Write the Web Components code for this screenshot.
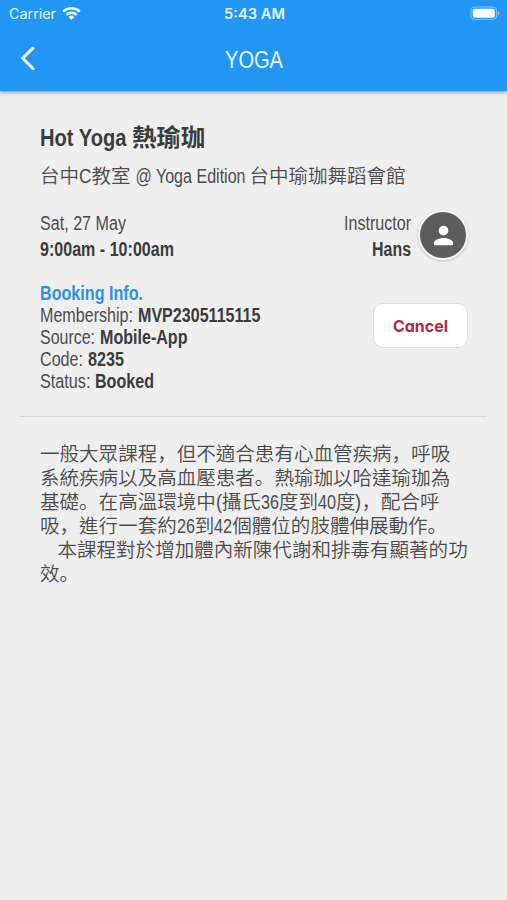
<!DOCTYPE html>
<html lang="zh-Hant">
<head>
<meta charset="utf-8">
<title>YOGA</title>
<style>
html,body{margin:0;height:100%;background:#efefef}
body{font-family:"Liberation Sans Narrow","Liberation Sans","Noto Sans CJK TC",sans-serif;color:#4c4c4c}
</style>
</head>
<body>
<yoga-screen></yoga-screen>
<script>
// Single line of text condensed or widened to a given width
class FitText extends HTMLElement{
  connectedCallback(){
    const r=this.attachShadow({mode:'open'});
    r.innerHTML=`<style>:host{display:inline-block;white-space:pre;vertical-align:baseline}
    span{display:inline-block;transform-origin:0 50%;white-space:pre}</style><span><slot></slot></span>`;
    const w=parseFloat(this.getAttribute('w')), s=r.querySelector('span');
    const n=s.getBoundingClientRect().width;
    if(w&&n){s.style.transform=`scaleX(${w/n})`;s.style.marginRight=(w-n)+'px';}
  }
}
class StatusBar extends HTMLElement{
  constructor(){super();this.attachShadow({mode:'open'}).innerHTML=`<style>
  :host{display:grid;grid-template-columns:1fr auto 1fr;align-items:center;height:27px;padding:0 7px 0 9px;color:#e3f4ff;font:14px Inter,sans-serif}
  .l{display:flex;align-items:center;gap:6px}.r{display:flex;justify-content:flex-end}
  b{font-weight:600}svg{display:block}</style>
  <div class="l"><fit-text w="47">Carrier</fit-text>
  <svg width="19" height="15" viewBox="0 0 19 14" fill="none" stroke="#f2fbff" stroke-width="2.4"><path d="M1.2 5.1a11.8 11.8 0 0 1 16.6 0M4.3 8.4a7.4 7.4 0 0 1 10.4 0"/><path d="M9.5 13.4 6.5 10.4a4.3 4.3 0 0 1 6 0z" fill="#f2fbff" stroke="none"/></svg></div>
  <b><fit-text w="61">5:43 AM</fit-text></b>
  <div class="r"><svg width="30" height="15" viewBox="0 0 30 15"><rect x="1" y="1" width="25.5" height="12.5" rx="3.8" fill="none" stroke="#7fc3fa" stroke-width="1.1"/><rect x="2.8" y="2.8" width="22" height="9" rx="2" fill="#fff"/><path d="M27.8 5v4.6c2-.8 2-3.8 0-4.6z" fill="#8ccafb"/></svg></div>`;}
}
class AppBar extends HTMLElement{
  constructor(){super();this.attachShadow({mode:'open'}).innerHTML=`<style>
  :host{display:grid;grid-template-columns:1fr auto 1fr;align-items:center;height:64px;padding:0 20px;color:#e9f8ff;font-size:24.4px}
  svg{display:block}fit-text{margin-top:2px}</style>
  <svg width="16" height="26" viewBox="0 0 16 26" fill="none" stroke="#f0faff" stroke-width="3" stroke-linecap="round"><path d="M13 2.2 2.7 12.2 13 22.5"/></svg>
  <fit-text w="58"><slot></slot></fit-text>`;}
}
class UserAvatar extends HTMLElement{
  constructor(){super();this.attachShadow({mode:'open'}).innerHTML=`<style>
  :host{display:grid;place-items:center;box-sizing:border-box;width:50px;height:50px;border:2px solid #f6f6f6;border-radius:50%;background:#5c5c5c;box-shadow:0 1px 3px #0003}
  svg{display:block}</style>
  <svg width="29" height="29" viewBox="0 0 24 24" fill="#fff"><path d="M12 12a4 4 0 1 0 0-8 4 4 0 0 0 0 8zm0 2c-2.67 0-8 1.34-8 4v1.2q0 .8.8.8h14.4q.8 0 .8-.8V18c0-2.66-5.33-4-8-4z"/></svg>`;}
}
class CancelButton extends HTMLElement{
  constructor(){super();this.attachShadow({mode:'open'}).innerHTML=`<style>
  :host{display:block}
  button{display:grid;place-items:center;box-sizing:border-box;width:95px;height:45px;padding:0;border:1px solid #dedede;border-radius:10px;background:#fff;color:#ae2a40;font:700 16.5px Inter,sans-serif;font-feature-settings:"cv11"}
  </style><button><fit-text w="55"><slot></slot></fit-text></button>`;}
}
class InfoRow extends HTMLElement{
  constructor(){super();this.attachShadow({mode:'open'}).innerHTML=`<style>
  :host{display:flex;height:22px;line-height:22px;font-size:19.5px}b{color:#3c3c3c}</style>
  <slot name="k"></slot><b><slot></slot></b>`;}
}
class ClassText extends HTMLElement{
  constructor(){super();this.attachShadow({mode:'open'}).innerHTML=`<style>
  :host{display:block;padding:24px 20px 0;font-size:19.55px;line-height:24px}
  div{height:24.05px;white-space:pre;font-family:"Noto Sans CJK TC",sans-serif;font-weight:350}
  .n{font-family:"Liberation Sans Narrow","Liberation Sans",sans-serif}
  i{font-style:normal;font-family:"Noto Sans CJK SC",sans-serif}</style>
  <div>一般大眾課程<i lang="zh-Hans">，</i>但不適合患有心血管疾病<i lang="zh-Hans">，</i>呼吸</div>
  <div>系統疾病以及高血壓患者<i lang="zh-Hans">。</i>熱瑜珈以哈達瑜珈為</div>
  <div>基礎<i lang="zh-Hans">。</i>在高溫環境中<fit-text class="n" w="6">(</fit-text>攝氏<fit-text class="n" w="18">36</fit-text>度到<fit-text class="n" w="18">40</fit-text>度<fit-text class="n" w="6">)</fit-text><i lang="zh-Hans">，</i>配合呼</div>
  <div>吸<i lang="zh-Hans">，</i>進行一套約<fit-text class="n" w="18">26</fit-text>到<fit-text class="n" w="18">42</fit-text>個體位的肢體伸展動作<i lang="zh-Hans">。</i></div>
  <div><fit-text class="n" w="17.5">    </fit-text>本課程對於增加體內新陳代謝和排毒有顯著的功</div>
  <div>效<i lang="zh-Hans">。</i></div>`;}
}
class YogaScreen extends HTMLElement{
  constructor(){super();this.attachShadow({mode:'open'}).innerHTML=`<style>
  :host{display:block;height:900px;overflow:hidden;background:#efefef}
  header{height:91px;background:#2296f3;box-shadow:0 1px 4px #0007}
  main{padding:0 20px}
  .d{padding:27px 20px 0;height:326px;box-sizing:border-box;border-bottom:1px solid #d6d6d6}
  h1{margin:0;height:36px;line-height:36px;font-size:24.4px;color:#3c3c3c;white-space:pre}
  .s{height:24px;line-height:24px;margin-top:9px;font-size:19.5px;white-space:pre}
  .c{font-family:"Noto Sans CJK TC",sans-serif;font-weight:350}
  h1 .c{font-weight:700}
  .row{display:flex;justify-content:space-between}
  .m{margin-top:23px;height:52px;font-size:19.5px;line-height:26px}
  .m b,.m fit-text{display:block}.m b{color:#3c3c3c}
  .t{display:flex;gap:7px;margin-right:-1px}.t>div{display:flex;flex-direction:column;align-items:flex-end}
  .b{margin-top:20px;align-items:flex-start}
  .b h2{margin:0;height:22px;line-height:22px;font-size:19.5px;color:#2f93dc}
  cancel-button{margin-top:21px;margin-right:-1px}</style>
  <header><status-bar></status-bar><app-bar>YOGA</app-bar></header>
  <main><section class="d">
  <h1><fit-text w="92">Hot Yoga </fit-text><span class="c">熱瑜珈</span></h1>
  <div class="s"><span class="c">台中</span><fit-text w="12.5">C</fit-text><span class="c">教室</span><fit-text w="119"> @ Yoga Edition </fit-text><span class="c">台中瑜珈舞蹈會館</span></div>
  <div class="row m"><div><fit-text w="86">Sat, 27 May</fit-text><b><fit-text w="134">9:00am - 10:00am</fit-text></b></div>
  <div class="t"><div><fit-text w="67">Instructor</fit-text><b><fit-text w="39">Hans</fit-text></b></div><user-avatar></user-avatar></div></div>
  <div class="row b"><div><h2><fit-text w="103">Booking Info.</fit-text></h2>
  <info-row><fit-text slot="k" w="97.5">Membership: </fit-text><fit-text w="122.5">MVP2305115115</fit-text></info-row>
  <info-row><fit-text slot="k" w="59.5">Source: </fit-text><fit-text w="87.5">Mobile-App</fit-text></info-row>
  <info-row><fit-text slot="k" w="47.5">Code: </fit-text><fit-text w="36">8235</fit-text></info-row>
  <info-row><fit-text slot="k" w="55">Status: </fit-text><fit-text w="59">Booked</fit-text></info-row></div>
  <cancel-button>Cancel</cancel-button></div>
  </section><class-text></class-text></main>`;}
}
customElements.define('status-bar',StatusBar);
customElements.define('app-bar',AppBar);
customElements.define('user-avatar',UserAvatar);
customElements.define('cancel-button',CancelButton);
customElements.define('info-row',InfoRow);
customElements.define('class-text',ClassText);
customElements.define('yoga-screen',YogaScreen);
customElements.define('fit-text',FitText);
</script>
</body>
</html>
